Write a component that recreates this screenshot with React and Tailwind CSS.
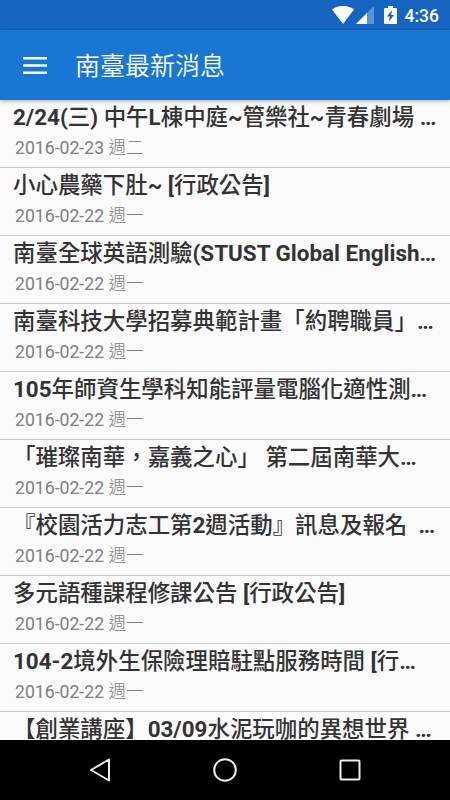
const news = [
  { title: '2/24(三) 中午L棟中庭~管樂社~青春劇場 …', date: '2016-02-23 週二' },
  { title: '小心農藥下肚~ [行政公告]', date: '2016-02-22 週一' },
  { title: '南臺全球英語測驗(STUST Global English…', date: '2016-02-22 週一' },
  { title: '南臺科技大學招募典範計畫「約聘職員」…', date: '2016-02-22 週一' },
  { title: '105年師資生學科知能評量電腦化適性測…', date: '2016-02-22 週一' },
  { title: '「璀璨南華，嘉義之心」 第二屆南華大…', date: '2016-02-22 週一' },
  { title: '『校園活力志工第2週活動』訊息及報名  …', date: '2016-02-22 週一' },
  { title: '多元語種課程修課公告 [行政公告]', date: '2016-02-22 週一' },
  { title: '104-2境外生保險理賠駐點服務時間 [行…', date: '2016-02-22 週一' },
  { title: '【創業講座】03/09水泥玩咖的異想世界 …' },
]

function StatusBar() {
  return (
    <div className="h-[30px] shrink-0 bg-[#1565c0] flex items-center justify-end pr-[11px] text-white">
      <svg className="w-[22px] h-[18px]" viewBox="0 0 22 18" fill="currentColor">
        <path d="M0 3.500C6-1.200 16-1.200 22 3.500L11 18Z" />
      </svg>
      <svg className="w-[18px] h-[18px] ml-[2px]" viewBox="0 0 18 18" fill="currentColor">
        <path d="M18 0V18H0Z" opacity=".3" />
        <path d="M11 7V18H0Z" />
      </svg>
      <svg className="w-[13px] h-[18px] ml-[10px]" viewBox="0 0 13 18">
        <path fill="currentColor" d="M4 0h5v2h3q1 0 1 1v14q0 1-1 1H1q-1 0-1-1V3q0-1 1-1h3z" />
        <path fill="#1565c0" d="M8 4 3 10.500H5.800L5 15.500l5-6.500H7.200z" />
      </svg>
      <span className="text-[17.5px] leading-[30px] pt-[2px] font-medium ml-[8px]">4:36</span>
    </div>
  )
}

function Toolbar() {
  return (
    <div className="relative z-10 h-[70px] shrink-0 bg-[#1976d2] flex items-center pl-[23px] text-white shadow-[0_1px_4px_rgba(0,0,0,0.35)]">
      <svg className="w-[24px] h-[17px]" viewBox="0 0 24 17" fill="currentColor">
        <path d="M0 0h24v2.600H0zM0 7.200h24v2.600H0zM0 14.400h24V17H0z" />
      </svg>
      <h1 className="text-[25px] leading-none ml-[28px] pb-[2px] font-['Noto_Sans_CJK_TC_DemiLight','Noto_Sans_CJK_TC',sans-serif]">南臺最新消息</h1>
    </div>
  )
}

export default function App() {
  return (
    <div className="w-[450px] h-[800px] flex flex-col overflow-hidden bg-[#fafafa] font-[Roboto,'Noto_Sans_CJK_TC',sans-serif]">
      <StatusBar />
      <Toolbar />
      <main className="flex-1 min-h-0 overflow-hidden">
        {news.map(item => (
          <article key={item.title} className="h-[68px] border-b border-[#c8c8c8] whitespace-pre">
            <h2 className="h-[36px] leading-[34px] pl-[13px] text-[22.45px] font-bold text-[#333] font-[Roboto,'Noto_Sans_CJK_TC_Medium','Noto_Sans_CJK_TC',sans-serif]">{item.title}</h2>
            {item.date && (
              <p className="h-[24px] leading-[24px] pl-[15px] text-[17.65px] text-[#808080] font-[Roboto,'Noto_Sans_CJK_TC_Light','Noto_Sans_CJK_TC',sans-serif]">{item.date}</p>
            )}
          </article>
        ))}
      </main>
      <nav className="h-[60px] shrink-0 bg-black flex justify-center items-center gap-[101px] text-[#eee]">
        <svg width="24" height="24" viewBox="0 0 24 24" fill="none" stroke="currentColor" strokeWidth="2" strokeLinejoin="round"><path d="M21 1.500v21L3 12z" /></svg>
        <svg width="24" height="24" viewBox="0 0 24 24" fill="none" stroke="currentColor" strokeWidth="2"><circle cx="12" cy="12" r="10.800" /></svg>
        <svg width="24" height="24" viewBox="0 0 24 24" fill="none" stroke="currentColor" strokeWidth="2"><rect x="2.500" y="2.500" width="19" height="19" rx="1" /></svg>
      </nav>
    </div>
  )
}
